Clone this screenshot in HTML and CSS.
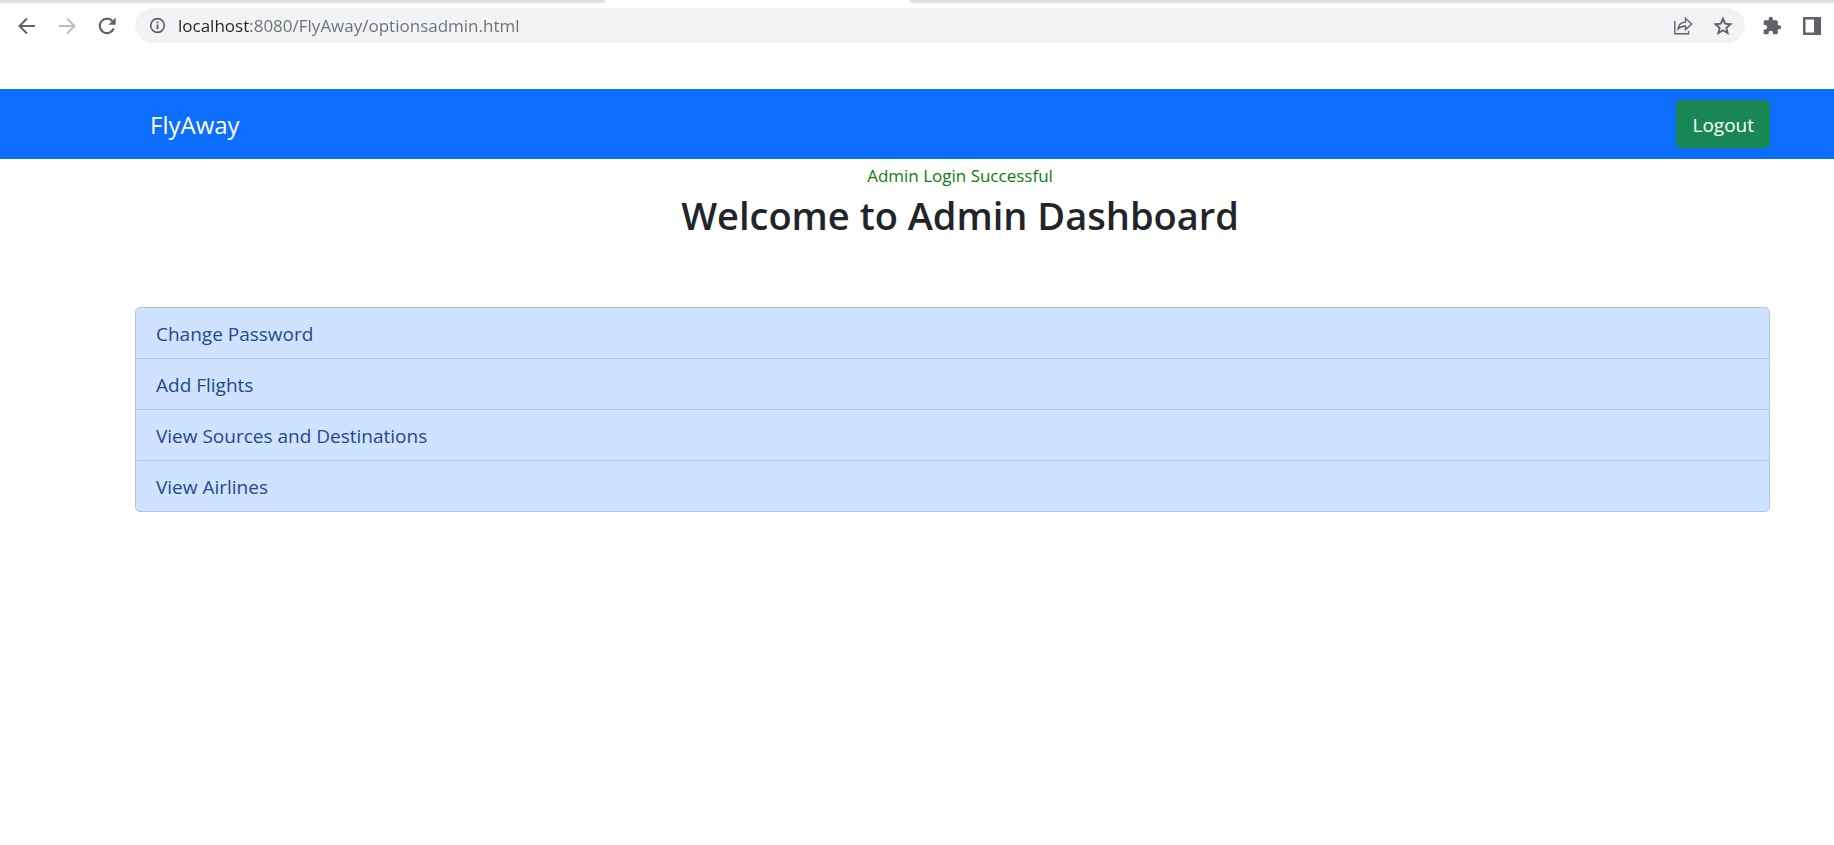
FILE: index.html
```html
<!DOCTYPE html>
<html lang="en">
<head>
<meta charset="utf-8">
<meta name="viewport" content="width=device-width, initial-scale=1">
<title>FlyAway</title>
<link rel="stylesheet" href="styles.css">
</head>
<body>
<div class="tabs"><div class="tab-rest tab-left"></div><div class="tab-active"></div><div class="tab-rest tab-right"></div></div>
<div class="toolbar">
  <div class="nav-buttons">
    <button class="tool" type="button" aria-label="Back"><svg viewBox="0 0 20 20"><path d="M18 10H3M10 2.500L2.500 10L10 17.500" fill="none" stroke="#5f6368" stroke-width="2"/></svg></button>
    <button class="tool" type="button" aria-label="Forward"><svg viewBox="0 0 20 20"><path d="M2 10H17M10 2.500L17.500 10L10 17.500" fill="none" stroke="#bbbdc0" stroke-width="2"/></svg></button>
    <button class="tool" type="button" aria-label="Reload"><svg viewBox="0 0 20 20"><path d="M16.700 12.500A7.200 7.200 0 1 1 15.500 5.200" fill="none" stroke="#5f6368" stroke-width="2.100"/><path d="M18.700 1.500V8.700H11.500Z" fill="#5f6368"/></svg></button>
  </div>
  <div class="address">
    <svg class="info" viewBox="0 0 18 18"><circle cx="9" cy="9" r="7.200" fill="none" stroke="#5f6368" stroke-width="1.800"/><path d="M9 8v5M9 4.700v2" stroke="#5f6368" stroke-width="2"/></svg>
    <input class="url" type="text" aria-label="Address" value="localhost:8080/FlyAway/optionsadmin.html">
    <button class="tool" type="button" aria-label="Share"><svg viewBox="0 0 20 20"><path d="M1.800 5V17.700H15.500V15M5 13C5.500 8.500 8 6.300 12.500 6.100V2.300L18.700 8L12.500 13.600V10C9 10 7 11 5 13Z" fill="none" stroke="#5f6368" stroke-width="1.400"/></svg></button>
    <button class="tool" type="button" aria-label="Bookmark"><svg viewBox="0 0 20 20"><path d="M10 2.700L12.100 7.700L17.500 8.200L13.400 11.800L14.600 17.100L10 14.300L5.400 17.100L6.600 11.800L2.500 8.200L7.900 7.700Z" fill="none" stroke="#5f6368" stroke-width="1.900"/></svg></button>
  </div>
  <div class="extras">
    <button class="tool" type="button" aria-label="Extensions"><svg viewBox="0 0 24 24"><path fill="#5f6368" d="M20.500 11H19V7c0-1.100-.9-2-2-2h-4V3.500a2.500 2.500 0 0 0-5 0V5H4c-1.100 0-2 .9-2 2v3.800h1.500a2.700 2.700 0 0 1 0 5.400H2V20c0 1.100.9 2 2 2h3.800v-1.500a2.700 2.700 0 0 1 5.400 0V22H17c1.100 0 2-.9 2-2v-4h1.500a2.500 2.500 0 0 0 0-5z"/></svg></button>
    <button class="tool" type="button" aria-label="Side panel"><svg viewBox="0 0 20 20"><path fill="#5f6368" fill-rule="evenodd" d="M1 1H19V19H1ZM3.500 3.500V16.500H12V3.500Z"/></svg></button>
  </div>
</div>
<nav class="navbar">
  <a class="brand" href="#">FlyAway</a>
  <button class="logout" type="button">Logout</button>
</nav>
<main>
  <header class="intro">
    <p class="status">Admin Login Successful</p>
    <h1 class="title">Welcome to Admin Dashboard</h1>
  </header>
  <ul class="options">
    <li><a class="option" href="#">Change Password</a></li>
    <li><a class="option" href="#">Add Flights</a></li>
    <li><a class="option" href="#">View Sources and Destinations</a></li>
    <li><a class="option" href="#">View Airlines</a></li>
  </ul>
</main>
</body>
</html>
```
FILE: styles.css
```css
* {
  box-sizing: border-box;
}

body {
  margin: 0;
  background: #fff;
  color: #212529;
  font-family: "Open Sans", "Noto Sans", sans-serif;
}

a {
  text-decoration: none;
}

button {
  border: 0;
  font-family: inherit;
}

.tabs {
  display: flex;
  height: 3px;
}

.tab-rest {
  background: #dee1e6;
}

.tab-left {
  flex: 330;
  border-bottom-right-radius: 3px;
}

.tab-active {
  flex: 166;
}

.tab-right {
  flex: 504;
  border-bottom-left-radius: 3px;
}

.toolbar {
  display: flex;
  align-items: center;
  padding: 5px 12px 0 17px;
  margin-bottom: 46px;
}

.nav-buttons {
  display: flex;
  gap: 20px;
  width: 118px;
}

.tool {
  width: 20px;
  height: 20px;
  padding: 0;
  background: none;
}

.tool svg,
.info {
  display: block;
  width: 100%;
}

.address {
  display: flex;
  flex: 1;
  align-items: center;
  gap: 20px;
  height: 35px;
  padding: 0 12px 0 14px;
  border-radius: 18px;
  background: #f1f3f4;
}

.address .info {
  width: 17px;
  margin-right: -8px;
}

.url {
  flex: 1;
  min-width: 0;
  padding: 0;
  border: 0;
  outline: 0;
  color: #5f6368;
  font-family: inherit;
  font-size: 17px;
  line-height: 24px;
  background: linear-gradient(90deg, #202124 73px, #6b6f73 73px);
  -webkit-background-clip: text;
  background-clip: text;
  -webkit-text-fill-color: transparent;
}

.extras {
  display: flex;
  gap: 20px;
  margin-left: 17px;
}

.navbar {
  display: flex;
  align-items: center;
  justify-content: space-between;
  min-height: 70px;
  padding: 11px 64px 11px 150px;
  background: #0d6efd;
}

.brand {
  padding-top: 2px;
  color: #fff;
  font-size: 24px;
  line-height: 36px;
}

.logout {
  padding: 10px 16px 8px;
  border-radius: 5px;
  background: #198754;
  color: #fff;
  font-size: 19px;
  line-height: 30px;
}

.intro {
  margin-left: 86px;
  padding-top: 4px;
  text-align: center;
}

.status {
  margin: 0;
  color: #107c10;
  font-size: 17px;
  line-height: 26px;
}

.title {
  margin: 0;
  font-size: 38px;
  font-weight: 600;
  line-height: 52px;
}

.options {
  margin: 66px 64px 0 135px;
  padding: 0;
  overflow: hidden;
  border: 1px solid #aec3e6;
  border-radius: 5px;
  background: #cfe2ff;
  list-style: none;
}

.options li + li {
  border-top: 1px solid #aec3e6;
}

.option {
  display: block;
  padding: 11px 20px 9px;
  color: #234a8c;
  font-size: 19px;
  line-height: 30px;
}
```
